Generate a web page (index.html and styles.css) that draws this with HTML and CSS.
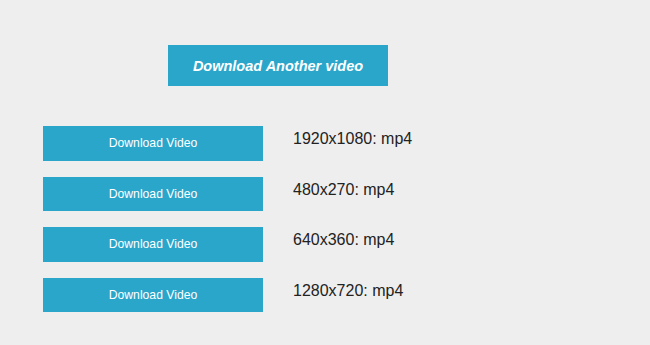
FILE: index.html
```html
<!DOCTYPE html>
<html>
<head>
<meta charset="utf-8">
<link rel="stylesheet" href="styles.css">
</head>
<body>
<div class="page">
  <div class="top">
    <button class="btn btn-main">Download Another video</button>
  </div>
  <ul class="list">
    <li class="row"><button class="btn btn-dl">Download Video</button><span class="label">1920x1080: mp4</span></li>
    <li class="row"><button class="btn btn-dl">Download Video</button><span class="label">480x270: mp4</span></li>
    <li class="row"><button class="btn btn-dl">Download Video</button><span class="label">640x360: mp4</span></li>
    <li class="row"><button class="btn btn-dl">Download Video</button><span class="label">1280x720: mp4</span></li>
  </ul>
</div>
</body>
</html>
```
FILE: styles.css
```css
html, body {
  margin: 0;
  padding: 0;
  background: #eeeeee;
  font-family: "Liberation Sans", Arial, sans-serif;
}
.page {
  padding-top: 45px;
}
.top {
  padding-left: 168px;
}
.btn {
  border: none;
  margin: 0;
  padding: 0;
  background: #2aa6cb;
  color: #ffffff;
  font-family: "Liberation Sans", Arial, sans-serif;
  cursor: pointer;
  display: block;
}
.btn-main {
  width: 220px;
  height: 41px;
  font-size: 14.5px;
  font-weight: bold;
  font-style: italic;
}
.list {
  list-style: none;
  margin: 40px 0 0 0;
  padding: 0 0 0 43px;
  display: flex;
  flex-direction: column;
  gap: 16px;
}
.row {
  display: flex;
  align-items: flex-start;
}
.btn-dl {
  width: 220px;
  height: 34.5px;
  font-size: 12.2px;
}
.label {
  margin-left: 30px;
  padding-top: 4px;
  font-size: 16px;
  color: #222222;
}
```
